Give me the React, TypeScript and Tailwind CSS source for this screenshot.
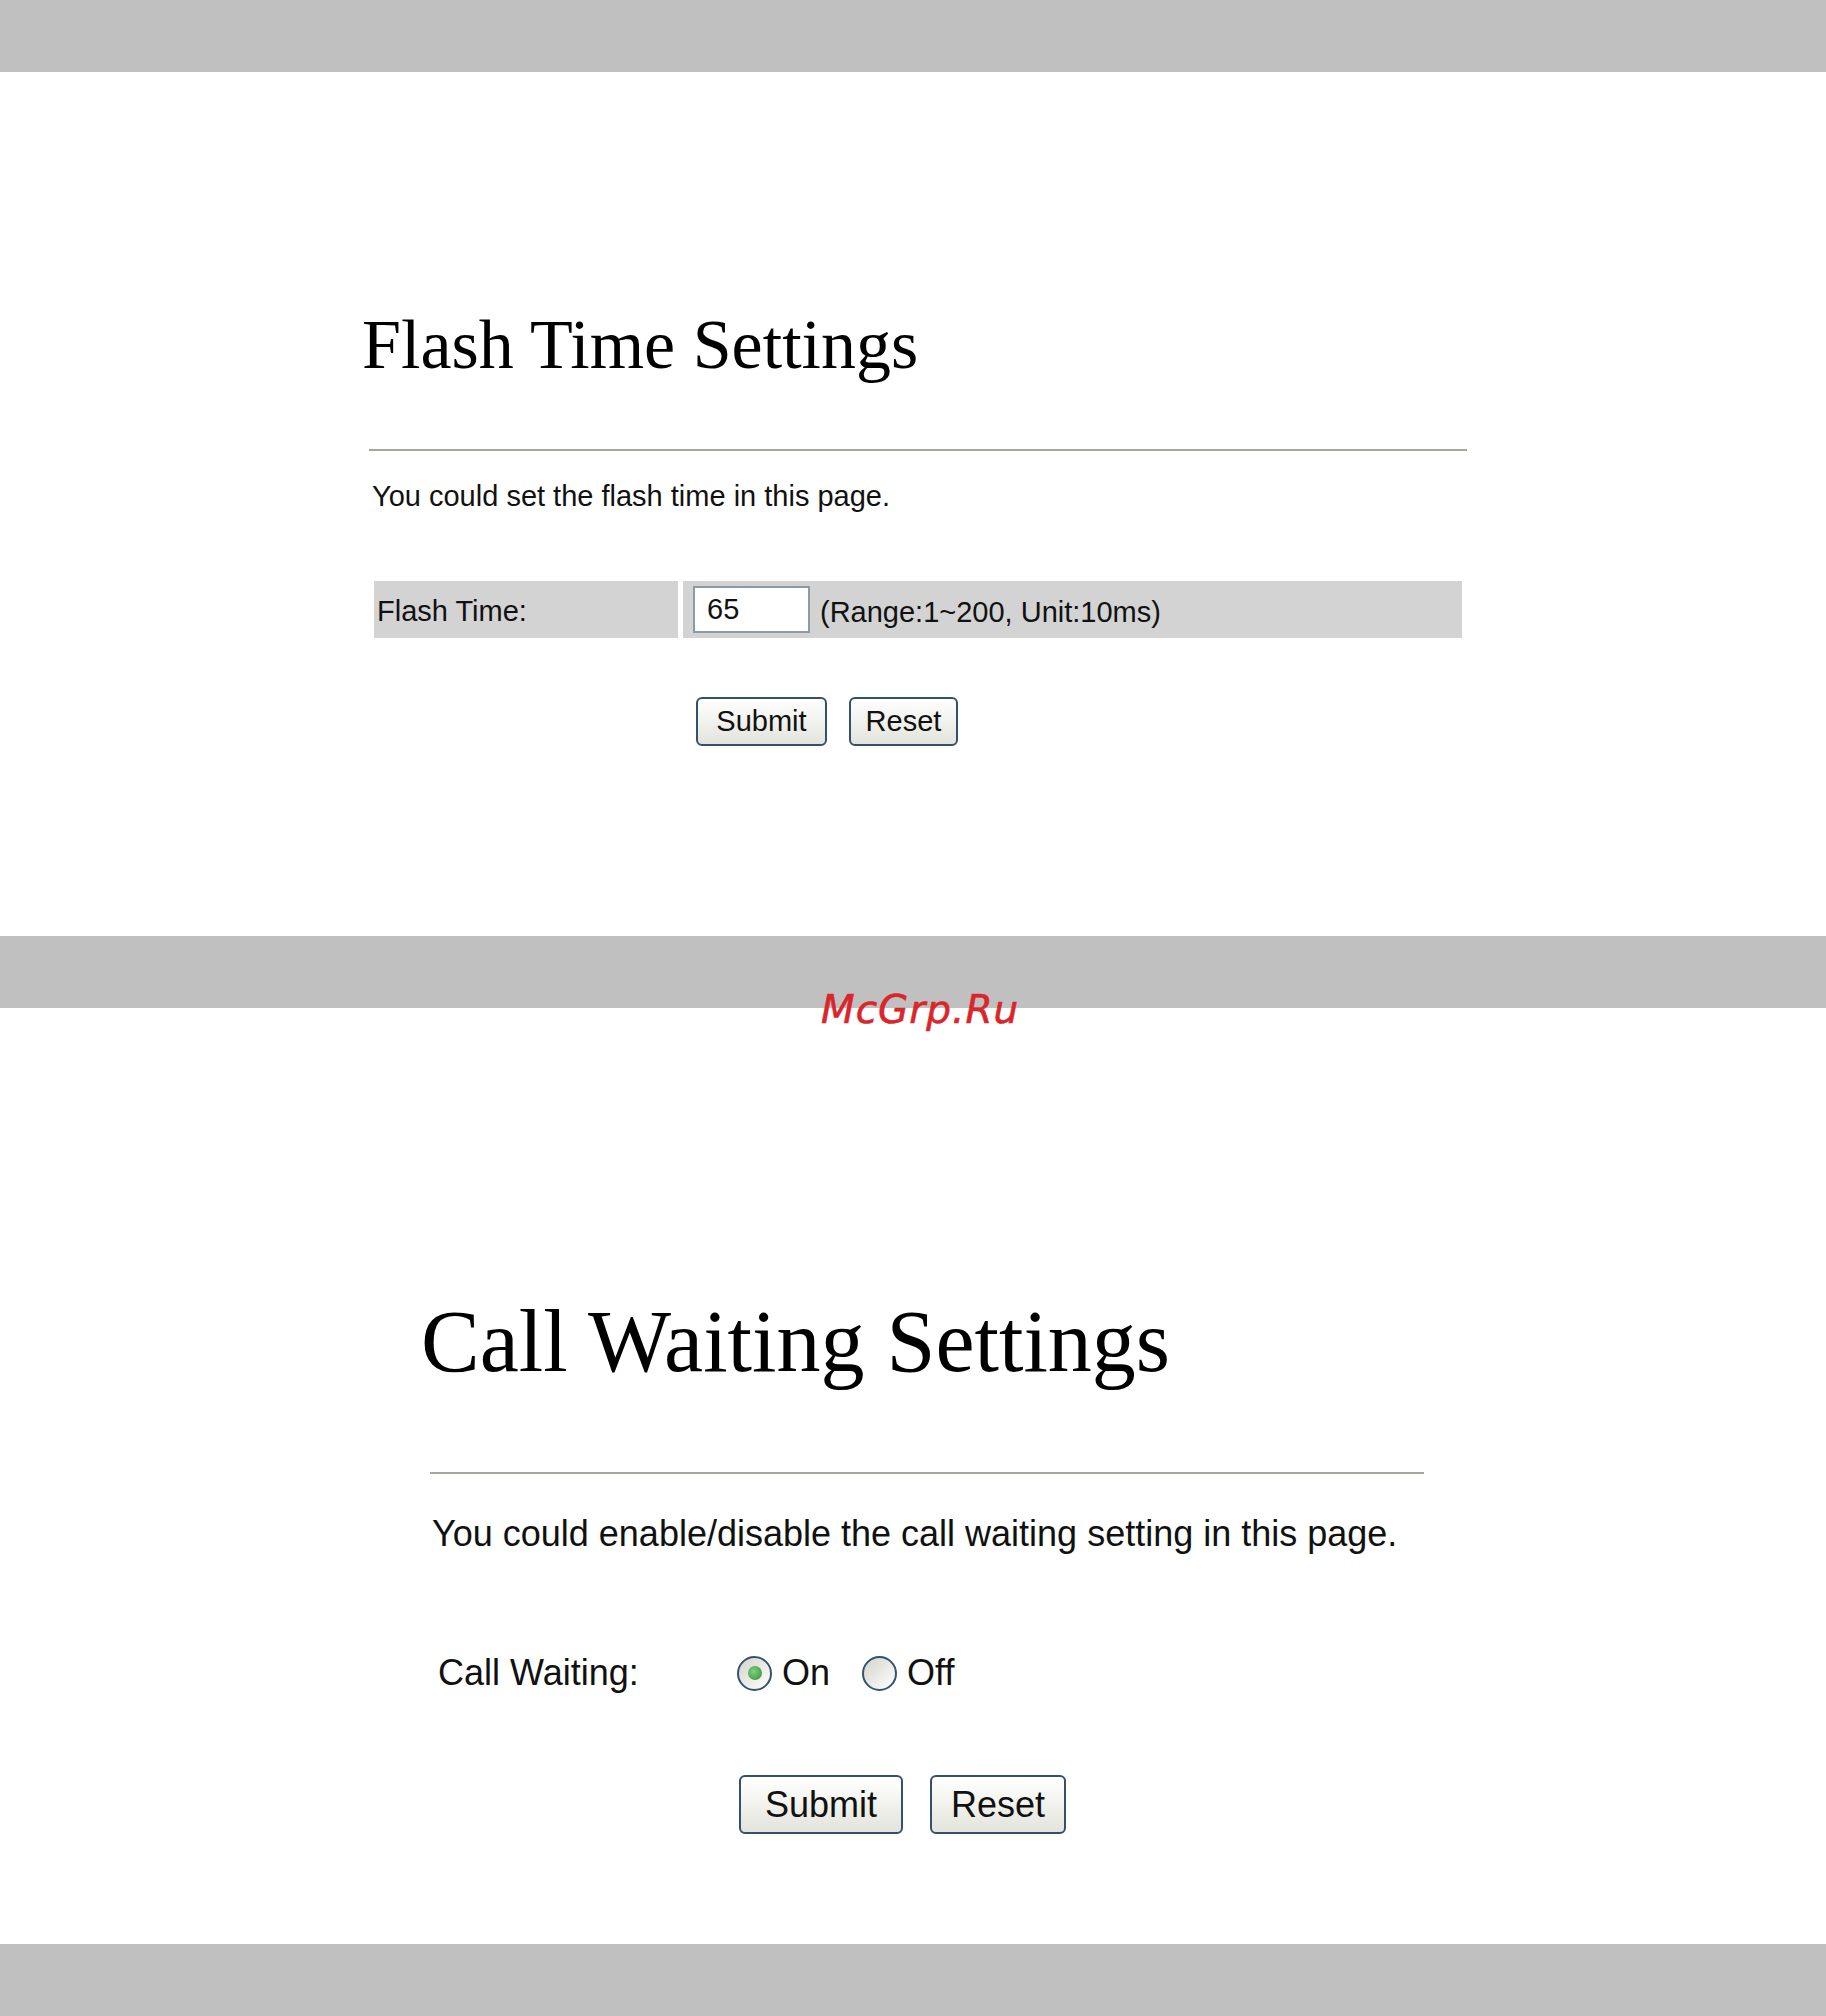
import React, { useState } from 'react';

const sans = "font-['Liberation_Sans',Arial,sans-serif]";
const serif = "font-['Liberation_Serif','Times_New_Roman',serif]";

function Radio({ checked, onClick, label }: { checked: boolean; onClick: () => void; label: string }) {
  return (
    <button type="button" onClick={onClick} className="flex items-center gap-[10px]">
      <span className="flex h-[35px] w-[35px] items-center justify-center rounded-full border-2 border-[#34536f] bg-gradient-to-br from-[#d4d4cc] to-[#ffffff]">
        {checked && (
          <span className="h-[14px] w-[14px] rounded-full bg-[radial-gradient(circle_at_40%_40%,#7fd27f,#2f8f2f)]" />
        )}
      </span>
      <span className="text-[36px] leading-none text-[#111]">{label}</span>
    </button>
  );
}

function XpButton({ children, className }: { children: React.ReactNode; className: string }) {
  return (
    <button
      type="button"
      className={`flex items-center justify-center rounded-[6px] border-2 border-[#34506c] bg-gradient-to-b from-[#ffffff] to-[#e4e4dc] leading-none text-[#111] ${className}`}
    >
      {children}
    </button>
  );
}

export default function App() {
  const [flashTime, setFlashTime] = useState('65');
  const [waiting, setWaiting] = useState(true);

  return (
    <div className={`relative h-[2016px] w-[1826px] bg-white ${sans}`}>
      <div className="h-[72px] bg-[#c0c0c0]" />

      {/* Flash Time Settings */}
      <div className="flex h-[864px] flex-col pt-[238px]">
        <h1 className={`${serif} pl-[362px] text-[70px] leading-none font-normal text-black`}>Flash Time Settings</h1>
        <div className="ml-[369px] mt-[69px] h-[2px] w-[1098px] bg-[#a6a69c]" />
        <p className="ml-[372px] mt-[31px] text-[29px] leading-none text-[#111]">You could set the flash time in this page.</p>

        <div className="ml-[374px] mt-[70px] flex h-[57px] w-[1088px] gap-[5px]">
          <div className="flex w-[304px] items-center bg-[#d3d3d3] pl-[3px] pt-[4px] text-[29px] leading-none text-[#111]">
            Flash Time:
          </div>
          <div className="flex flex-1 items-center bg-[#d3d3d3] pl-[10px]">
            <input
              value={flashTime}
              onChange={(e) => setFlashTime(e.target.value)}
              className="h-[47px] w-[117px] border-2 border-[#8c9aa6] bg-white pl-[12px] text-[29px] leading-none text-[#111] outline-none"
            />
            <span className="ml-[10px] pt-[6px] text-[29px] leading-none text-[#111]">(Range:1~200, Unit:10ms)</span>
          </div>
        </div>

        <div className="ml-[696px] mt-[59px] flex gap-[22px]">
          <XpButton className="h-[49px] w-[131px] text-[29px]">Submit</XpButton>
          <XpButton className="h-[49px] w-[109px] text-[29px]">Reset</XpButton>
        </div>
      </div>

      <div className="h-[72px] bg-[#c0c0c0]" />

      {/* Call Waiting Settings */}
      <div className="flex h-[936px] flex-col pt-[290px]">
        <h1 className={`${serif} pl-[421px] text-[88px] leading-none font-normal text-black`}>Call Waiting Settings</h1>
        <div className="ml-[430px] mt-[86px] h-[2px] w-[994px] bg-[#a6a69c]" />
        <p className="ml-[432px] mt-[42px] text-[36px] leading-none text-[#111]">
          You could enable/disable the call waiting setting in this page.
        </p>

        <div className="ml-[438px] mt-[103px] flex items-center">
          <span className="w-[299px] text-[36px] leading-none text-[#111]">Call Waiting:</span>
          <div className="flex items-center gap-[32px]">
            <Radio checked={waiting} onClick={() => setWaiting(true)} label="On" />
            <Radio checked={!waiting} onClick={() => setWaiting(false)} label="Off" />
          </div>
        </div>

        <div className="ml-[739px] mt-[84px] flex gap-[27px]">
          <XpButton className="h-[59px] w-[164px] text-[36px]">Submit</XpButton>
          <XpButton className="h-[59px] w-[136px] text-[36px]">Reset</XpButton>
        </div>
      </div>

      <div className="h-[72px] bg-[#c0c0c0]" />

      {/* watermark */}
      <div className="absolute left-[821px] top-[990px] font-['DejaVu_Sans',sans-serif] text-[39px] leading-none italic tracking-[1px] text-[#d9262b] [-webkit-text-stroke:0.6px_#d9262b]">
        McGrp.Ru
      </div>
    </div>
  );
}
